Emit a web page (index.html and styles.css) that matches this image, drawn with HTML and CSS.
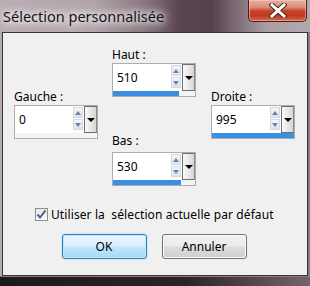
FILE: index.html
```html
<!DOCTYPE html>
<html lang="fr">
<head>
    <meta charset="UTF-8">
    <title>Sélection personnalisée</title>
    <link rel="stylesheet" href="styles.css">
</head>
<body>
    <div class="window">
        <div class="titlebar">
            <span class="title">Sélection personnalisée</span>
            <button class="close" aria-label="Fermer">
                <svg width="18" height="15" viewBox="0 0 18 15">
                    <path d="M3 2 L15 13 M15 2 L3 13" stroke="#4a2a24" stroke-width="5" stroke-linecap="square"/>
                    <path d="M3 2 L15 13 M15 2 L3 13" stroke="#ffffff" stroke-width="3" stroke-linecap="square"/>
                </svg>
            </button>
        </div>

        <div class="client">
            <div class="fields">
                <div class="col col-side">
                    <label class="field-label">Gauche :</label>
                    <div class="spin">
                        <div class="spin-main">
                            <span class="spin-value">0</span>
                            <div class="spin-arrows"><span class="arrow up"></span><span class="arrow down"></span></div>
                            <div class="spin-drop"><span class="drop-tri"></span></div>
                        </div>
                        <div class="spin-bar"><div class="spin-fill" style="width:0%"></div></div>
                    </div>
                </div>

                <div class="col col-mid">
                    <label class="field-label">Haut :</label>
                    <div class="spin">
                        <div class="spin-main">
                            <span class="spin-value">510</span>
                            <div class="spin-arrows"><span class="arrow up"></span><span class="arrow down"></span></div>
                            <div class="spin-drop"><span class="drop-tri"></span></div>
                        </div>
                        <div class="spin-bar"><div class="spin-fill" style="width:80%"></div></div>
                    </div>

                    <label class="field-label label-bas">Bas :</label>
                    <div class="spin">
                        <div class="spin-main">
                            <span class="spin-value">530</span>
                            <div class="spin-arrows"><span class="arrow up"></span><span class="arrow down"></span></div>
                            <div class="spin-drop"><span class="drop-tri"></span></div>
                        </div>
                        <div class="spin-bar"><div class="spin-fill" style="width:83%"></div></div>
                    </div>
                </div>

                <div class="col col-side col-right">
                    <label class="field-label">Droite :</label>
                    <div class="spin">
                        <div class="spin-main">
                            <span class="spin-value">995</span>
                            <div class="spin-arrows"><span class="arrow up"></span><span class="arrow down"></span></div>
                            <div class="spin-drop"><span class="drop-tri"></span></div>
                        </div>
                        <div class="spin-bar"><div class="spin-fill" style="width:100%"></div></div>
                    </div>
                </div>
            </div>

            <label class="check-row">
                <span class="checkbox">
                    <svg width="11" height="11" viewBox="0 0 11 11">
                        <path d="M1.5 5.5 L4 8.5 L9.5 1.5" fill="none" stroke="#4a5d94" stroke-width="2"/>
                    </svg>
                </span>
                Utiliser la&nbsp; sélection actuelle par défaut
            </label>

            <div class="buttons">
                <button class="btn btn-default">OK</button>
                <button class="btn">Annuler</button>
            </div>
        </div>
        <div class="bottom-frame"></div>
    </div>
</body>
</html>
```

FILE: styles.css
```css
* {
    box-sizing: border-box;
}

body {
    margin: 0;
    width: 310px;
    height: 286px;
    overflow: hidden;
    font-family: 'Noto Sans', sans-serif;
    font-size: 12px;
    color: #000;
    background: linear-gradient(to right, #b5abb0 0%, #9a8c93 45%, #6a5560 70%, #8d7b84 100%);
}

.window {
    display: flex;
    flex-direction: column;
    height: 286px;
}

/* title bar */
.titlebar {
    height: 32px;
    display: flex;
    justify-content: space-between;
    align-items: flex-start;
    background: linear-gradient(to right, #b9aeb3 0%, #b1a5ab 30%, #8d7c85 45%, #5a4551 58%, #543f4a 68%, #7d6a74 76%, #a99ea3 86%, #b2a8ad 100%);
}

.title {
    margin: 6px 0 0 3px;
    font-size: 14.5px;
    line-height: 20px;
    color: #151515;
    text-shadow: 0 0 6px #fff, 0 0 10px #fff, 0 0 14px #f4eef1;
}

.close {
    width: 59px;
    height: 22px;
    margin-right: 3px;
    padding: 0;
    border: 1px solid #4d1e18;
    border-top: none;
    border-radius: 0 0 5px 5px;
    display: flex;
    align-items: center;
    justify-content: center;
    background: linear-gradient(#e9b1a2 0%, #d98a74 35%, #c7432a 52%, #c23a20 75%, #d76a4d 100%);
    box-shadow: inset 0 0 0 1px rgba(255, 210, 200, 0.5);
}

/* client area */
.client {
    margin: 0 2px;
    height: 244px;
    border: 1px solid #3a3236;
    background: #f0f0f0;
    display: flex;
    flex-direction: column;
}

.fields {
    display: flex;
    gap: 14px;
    padding-left: 11px;
    height: 153px;
}

.col {
    width: 84px;
    display: flex;
    flex-direction: column;
}

.col-mid {
    padding-top: 14px;
}

.col-side {
    padding-top: 56px;
}

.col-right {
    margin-left: 1px;
}

.field-label {
    display: block;
    line-height: 15px;
    height: 15px;
    margin-bottom: 1px;
}

.label-bas {
    margin-top: 36px;
    margin-bottom: 4px;
}

/* spin box */
.spin {
    width: 84px;
    height: 34px;
    border: 1px solid #abadb3;
    background: #fff;
    display: flex;
    flex-direction: column;
}

.spin-main {
    flex: 1;
    display: flex;
}

.spin-value {
    flex: 1;
    padding: 6px 0 0 4px;
    line-height: 15px;
}

.spin-arrows {
    width: 10px;
    display: flex;
    flex-direction: column;
    gap: 1px;
    padding-top: 1px;
}

.arrow {
    height: 11px;
    border: 1px solid #d4d8e0;
    background: linear-gradient(#f4f6fa, #dde3ec);
    display: flex;
    align-items: center;
    justify-content: center;
}

.arrow::after {
    content: "";
    border-left: 3px solid transparent;
    border-right: 3px solid transparent;
}

.up::after {
    border-bottom: 4px solid #7082aa;
}

.down::after {
    border-top: 4px solid #7082aa;
}

.spin-drop {
    width: 13px;
    margin-left: 1px;
    border: 1px solid #6f6f6f;
    border-right-color: #8a8a8a;
    background: linear-gradient(to right, #fafafa, #d6d6d6);
    display: flex;
    align-items: center;
    justify-content: center;
}

.drop-tri {
    border-left: 4px solid transparent;
    border-right: 4px solid transparent;
    border-top: 4px solid #000;
}

.spin-bar {
    height: 5px;
    background: #f4f4f4;
}

.spin-fill {
    height: 100%;
    background: #3a8fe5;
}

/* checkbox row */
.check-row {
    display: flex;
    align-items: center;
    margin: 21px 0 0 32px;
    line-height: 15px;
    letter-spacing: 0.1px;
}

.checkbox {
    width: 13px;
    height: 13px;
    margin-right: 3px;
    border: 1px solid #8e8f8f;
    background: linear-gradient(#e8e8e8, #fbfbfb);
    display: flex;
    align-items: center;
    justify-content: center;
}

/* buttons */
.buttons {
    display: flex;
    justify-content: center;
    gap: 15px;
    margin-top: 12px;
    padding-right: 2px;
}

.btn {
    width: 85px;
    height: 25px;
    padding: 0;
    font-family: inherit;
    font-size: 12px;
    color: #000;
    border: 1px solid #707070;
    border-radius: 3px;
    background: linear-gradient(#f2f2f2 0%, #ebebeb 48%, #dddddd 52%, #cfcfcf 100%);
    box-shadow: inset 0 0 0 1px #fcfcfc;
}

.btn-default {
    border-color: #3c7fb1;
    background: linear-gradient(#eaf6fd 0%, #d9f0fc 48%, #bee6fd 52%, #a7d9f5 100%);
    box-shadow: inset 0 0 0 1px #bde6fb, 0 0 2px #8fd0f5;
}

.bottom-frame {
    flex: 1;
    border-top: 1px solid #8a7c83;
    background: linear-gradient(to right, #1c1a1b 0%, #2a2426 60%, #5c4a54 85%, #76636d 100%);
}
```
